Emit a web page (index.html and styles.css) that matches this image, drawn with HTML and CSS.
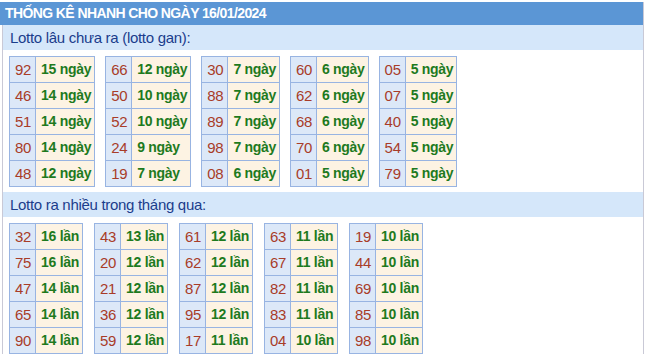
FILE: index.html
```html
<!DOCTYPE html>
<html lang="vi">
<head>
<meta charset="utf-8">
<link rel="stylesheet" href="styles.css">
</head>
<body>
<div class="box">
  <div class="title">THỐNG KÊ NHANH CHO NGÀY 16/01/2024</div>
  <div class="sub">Lotto lâu chưa ra (lotto gan):</div>
  <div class="grid">
    <table class="t"><tr><td class="n">92</td><td class="v">15 ngày</td></tr><tr><td class="n">46</td><td class="v">14 ngày</td></tr><tr><td class="n">51</td><td class="v">14 ngày</td></tr><tr><td class="n">80</td><td class="v">14 ngày</td></tr><tr><td class="n">48</td><td class="v">12 ngày</td></tr></table>
    <table class="t"><tr><td class="n">66</td><td class="v">12 ngày</td></tr><tr><td class="n">50</td><td class="v">10 ngày</td></tr><tr><td class="n">52</td><td class="v">10 ngày</td></tr><tr><td class="n">24</td><td class="v">9 ngày</td></tr><tr><td class="n">19</td><td class="v">7 ngày</td></tr></table>
    <table class="t"><tr><td class="n">30</td><td class="v">7 ngày</td></tr><tr><td class="n">88</td><td class="v">7 ngày</td></tr><tr><td class="n">89</td><td class="v">7 ngày</td></tr><tr><td class="n">98</td><td class="v">7 ngày</td></tr><tr><td class="n">08</td><td class="v">6 ngày</td></tr></table>
    <table class="t"><tr><td class="n">60</td><td class="v">6 ngày</td></tr><tr><td class="n">62</td><td class="v">6 ngày</td></tr><tr><td class="n">68</td><td class="v">6 ngày</td></tr><tr><td class="n">70</td><td class="v">6 ngày</td></tr><tr><td class="n">01</td><td class="v">5 ngày</td></tr></table>
    <table class="t"><tr><td class="n">05</td><td class="v">5 ngày</td></tr><tr><td class="n">07</td><td class="v">5 ngày</td></tr><tr><td class="n">40</td><td class="v">5 ngày</td></tr><tr><td class="n">54</td><td class="v">5 ngày</td></tr><tr><td class="n">79</td><td class="v">5 ngày</td></tr></table>
  </div>
  <div class="sub">Lotto ra nhiều trong tháng qua:</div>
  <div class="grid grid-wide">
    <table class="t"><tr><td class="n">32</td><td class="v">16 lần</td></tr><tr><td class="n">75</td><td class="v">16 lần</td></tr><tr><td class="n">47</td><td class="v">14 lần</td></tr><tr><td class="n">65</td><td class="v">14 lần</td></tr><tr><td class="n">90</td><td class="v">14 lần</td></tr></table>
    <table class="t"><tr><td class="n">43</td><td class="v">13 lần</td></tr><tr><td class="n">20</td><td class="v">12 lần</td></tr><tr><td class="n">21</td><td class="v">12 lần</td></tr><tr><td class="n">36</td><td class="v">12 lần</td></tr><tr><td class="n">59</td><td class="v">12 lần</td></tr></table>
    <table class="t"><tr><td class="n">61</td><td class="v">12 lần</td></tr><tr><td class="n">62</td><td class="v">12 lần</td></tr><tr><td class="n">87</td><td class="v">12 lần</td></tr><tr><td class="n">95</td><td class="v">12 lần</td></tr><tr><td class="n">17</td><td class="v">11 lần</td></tr></table>
    <table class="t"><tr><td class="n">63</td><td class="v">11 lần</td></tr><tr><td class="n">67</td><td class="v">11 lần</td></tr><tr><td class="n">82</td><td class="v">11 lần</td></tr><tr><td class="n">83</td><td class="v">11 lần</td></tr><tr><td class="n">04</td><td class="v">10 lần</td></tr></table>
    <table class="t"><tr><td class="n">19</td><td class="v">10 lần</td></tr><tr><td class="n">44</td><td class="v">10 lần</td></tr><tr><td class="n">69</td><td class="v">10 lần</td></tr><tr><td class="n">85</td><td class="v">10 lần</td></tr><tr><td class="n">98</td><td class="v">10 lần</td></tr></table>
  </div>
</div>
</body>
</html>
```
FILE: styles.css
```css
html, body {
  margin: 0;
  padding: 0;
  background: #ffffff;
}
body {
  padding-top: 2px;
  font-family: "Liberation Sans", Arial, sans-serif;
}
.box {
  width: 642px;
  margin-left: 2px;
  border-left: 1px solid #c9c9d6;
  border-right: 1px solid #c9c9d6;
  box-sizing: border-box;
  height: 352px;
}
.title {
  background: #5b96d5;
  color: #ffffff;
  font-weight: bold;
  font-size: 14px;
  letter-spacing: -0.6px;
  height: 23px;
  line-height: 23px;
  padding-left: 5px;
  margin-left: -3px;
}
.sub {
  background: #d5e7fa;
  color: #1b3d8c;
  font-size: 15px;
  letter-spacing: -0.3px;
  height: 25px;
  line-height: 25px;
  padding-left: 7px;
}
.grid {
  display: flex;
  align-items: flex-start;
  gap: 10px;
  padding: 6px 0 5px 6px;
}
.grid-wide {
  gap: 11px;
}
.t {
  border-collapse: collapse;
  flex: none;
}
.t td {
  border: 1px solid #98b4e2;
  height: 25px;
  line-height: 25px;
  white-space: nowrap;
}
.t .n {
  background: #dce8f8;
  color: #a83c29;
  font-size: 15px;
  letter-spacing: -0.3px;
  text-align: center;
  padding: 0 4px 0 5px;
}
.t .v {
  background: #fdf3e3;
  color: #1e7a1e;
  font-size: 14px;
  letter-spacing: -0.3px;
  font-weight: bold;
  text-align: left;
  padding: 0 3px 0 5px;
}
```
